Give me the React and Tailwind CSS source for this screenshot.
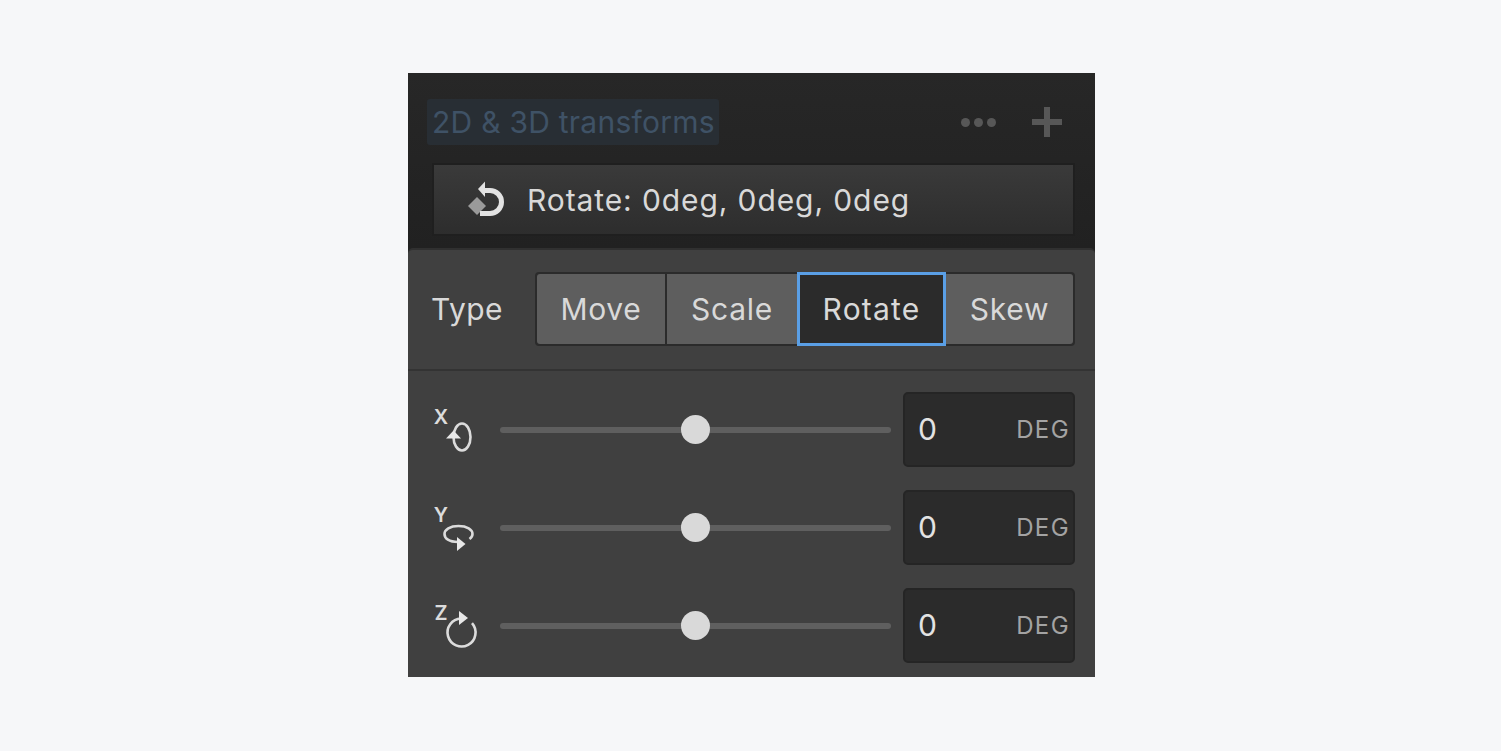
const FONT = "font-['Inter','Liberation_Sans',sans-serif]";

function ResetIcon() {
  return (
    <svg width="42" height="38" viewBox="0 0 42 38" className="shrink-0">
      <path d="M13 16 L22 25 L13 34 L4 25 Z" fill="#9a9a9a" />
      <path d="M14 8 L21 0.5 L21 16 Z" fill="#e2e2e2" />
      <path d="M19 9.5 H26 A11.5 11.5 0 0 1 26 32.5 H16" fill="none" stroke="#e2e2e2" strokeWidth="5" />
    </svg>
  );
}

function AxisX() {
  return (
    <svg width="48" height="54" viewBox="0 0 48 54" className="shrink-0">
      <ellipse cx="30" cy="34" rx="8.5" ry="13.5" fill="none" stroke="#dcdcdc" strokeWidth="2.6" />
      <path d="M14 35.5 L21.5 27.5 L29 35.5 Z" fill="#e8e8e8" />
    </svg>
  );
}

function AxisY() {
  return (
    <svg width="48" height="54" viewBox="0 0 48 54" className="shrink-0">
      <path d="M26 41 C17 41 12.5 37.5 12.5 33 C12.5 28.500 18 25 26.500 25 C35 25 40.500 28.500 40.500 33 C40.500 35 39.500 36.500 37.500 38" fill="none" stroke="#dcdcdc" strokeWidth="2.6" />
      <path d="M25 36 L33.500 43 L25 50 Z" fill="#e8e8e8" />
    </svg>
  );
}

function AxisZ() {
  return (
    <svg width="48" height="54" viewBox="0 0 48 54" className="shrink-0">
      <path d="M29 19.500 A14 14 0 1 0 40 24.200" fill="none" stroke="#dcdcdc" strokeWidth="2.6" />
      <path d="M27 12 L36 19 L27 26 Z" fill="#e8e8e8" />
    </svg>
  );
}

function Row({ label, icon, labelTop }) {
  return (
    <div className="flex h-[75px] items-center">
      <div className="relative h-[75px] w-[68px] shrink-0">
        <div className="absolute left-0 top-[11px]">{icon}</div>
        <span
          className="absolute left-0 w-[18px] text-center text-[20px] leading-[20px] font-semibold text-[#dcdcdc]"
          style={{ top: labelTop }}
        >
          {label}
        </span>
      </div>
      <div className="relative flex h-[29px] w-[391px] shrink-0 items-center">
        <div className="h-[6px] w-full rounded-full bg-[#5f5f5f]" />
        <div className="absolute left-[181px] top-0 h-[29px] w-[29px] rounded-full bg-[#d9d9d9]" />
      </div>
      <div className="ml-[12px] flex h-[75px] w-[172px] shrink-0 items-center justify-between rounded-[5px] border-2 border-[#252525] bg-[#2b2b2b] pl-[13px] pr-[3px]">
        <span className="text-[30px] text-[#e3e3e3]">0</span>
        <span className="text-[24px] tracking-[1.4px] text-[#a3a3a3]">DEG</span>
      </div>
    </div>
  );
}

function Segment({ children, className }) {
  return (
    <div className={`flex h-full items-center justify-center text-[30px] tracking-[0.7px] text-[#d9d9d9] ${className}`}>
      {children}
    </div>
  );
}

export default function App() {
  return (
    <div className={`min-h-[751px] bg-[#f6f7f9] pl-[408px] pt-[73px] ${FONT}`}>
      <div className="w-[687px] overflow-hidden bg-[#222222]">
        <div className="h-[175px] bg-gradient-to-b from-[#272727] to-[#212121] pl-[24px] pr-[22px] pt-[26px]">
          <div className="flex h-[46px] items-center justify-between">
            <div className="-ml-[5px] flex h-[46px] w-[292px] items-center rounded-[3px] bg-[#282e34] pl-[5px]">
              <span className="whitespace-nowrap text-[30px] tracking-[0.25px] text-[#3f5266]">2D &amp; 3D transforms</span>
            </div>
            <div className="flex items-center gap-[36px] pr-[11px]">
              <div className="flex gap-[4px]">
                <div className="h-[9px] w-[9px] rounded-full bg-[#575757]" />
                <div className="h-[9px] w-[9px] rounded-full bg-[#575757]" />
                <div className="h-[9px] w-[9px] rounded-full bg-[#575757]" />
              </div>
              <svg width="30" height="30" viewBox="0 0 30 30">
                <path d="M12 0 H18 V12 H30 V18 H18 V30 H12 V18 H0 V12 H12 Z" fill="#575757" />
              </svg>
            </div>
          </div>
          <div className="ml-[2px] mt-[20px] flex h-[69px] items-center gap-[21px] bg-gradient-to-b from-[#3a3a3a] to-[#2d2d2d] pl-[30px] shadow-[0_0_0_2px_#1f1f1f]">
            <ResetIcon />
            <span className="translate-y-[1px] whitespace-nowrap text-[30px] tracking-[0.9px] text-[#d9d9d9]">Rotate: 0deg, 0deg, 0deg</span>
          </div>
        </div>
        <div className="h-[429px] rounded-t-[5px] border-t-2 border-[#303030] bg-[#404040]">
          <div className="flex h-[121px] items-center border-b-2 border-[#333333] pb-[1px] pl-[23px] pr-[19px]">
            <span className="w-[104px] shrink-0 text-[30px] tracking-[0.4px] text-[#d9d9d9]">Type</span>
            <div className="flex h-[74px] w-[540px] shrink-0 rounded-[4px] border-2 border-[#2b2b2b] bg-[#2b2b2b]">
              <Segment className="w-[128px] rounded-l-[3px] bg-[#5e5e5e]">Move</Segment>
              <Segment className="ml-[2px] w-[130px] bg-[#5e5e5e]">Scale</Segment>
              <div className="-my-[2px] flex h-[74px] w-[149px] shrink-0 items-center justify-center border-[3px] border-[#5a9fe6] bg-[#2b2b2b] text-[30px] tracking-[1.2px] text-[#d9d9d9]">Rotate</div>
              <Segment className="w-[127px] rounded-r-[3px] bg-[#5e5e5e]">Skew</Segment>
            </div>
          </div>
          <div className="flex flex-col gap-[23px] pl-[24px] pr-[19px] pt-[21px]">
            <Row label="X" labelTop="15px" icon={<AxisX />} />
            <Row label="Y" labelTop="15px" icon={<AxisY />} />
            <Row label="Z" labelTop="15px" icon={<AxisZ />} />
          </div>
        </div>
      </div>
    </div>
  );
}
